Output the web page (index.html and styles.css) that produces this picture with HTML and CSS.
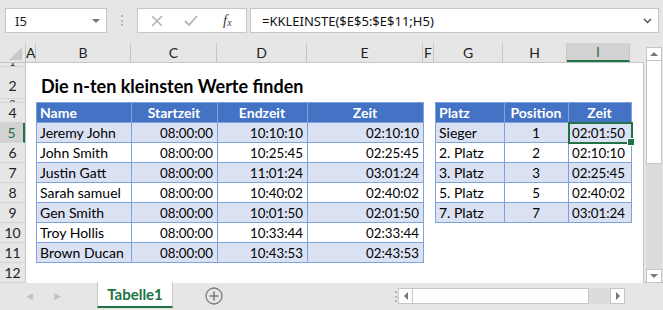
FILE: index.html
```html
<!DOCTYPE html>
<html lang="de">
  <head>
    <meta charset="UTF-8" />
    <title>Die n-ten kleinsten Werte finden</title>
    <link rel="stylesheet" href="styles.css">
  </head>
  <body>
    <div class="formula-bar">
      <div class="name-box">
        <span>I5</span>
        <span class="caret"></span>
      </div>
      <div class="grip"></div>
      <div class="fx-buttons">
        <svg class="btn-cancel" width="12" height="12" viewBox="0 0 12 12">
          <path d="M1 1 L11 11 M11 1 L1 11" stroke="#b4b4b4" stroke-width="1.6" fill="none" />
        </svg>
        <svg class="btn-enter" width="14" height="12" viewBox="0 0 14 12">
          <path d="M1 6 L5 10 L13 1" stroke="#b4b4b4" stroke-width="1.8" fill="none" />
        </svg>
        <span class="fx">f<sub>x</sub></span>
      </div>
      <div class="formula-input">
        <span>=KKLEINSTE($E$5:$E$11;H5)</span>
        <svg width="9" height="6" viewBox="0 0 9 6">
          <path d="M1 1 L4.5 4.5 L8 1" stroke="#555" stroke-width="1.5" fill="none" />
        </svg>
      </div>
    </div>

    <div class="workspace">
      <div class="sheet">
        <div class="col-headers">
          <div class="corner"></div>
          <div class="col-head col-a">A</div>
          <div class="col-head col-b">B</div>
          <div class="col-head col-c">C</div>
          <div class="col-head col-d">D</div>
          <div class="col-head col-e">E</div>
          <div class="col-head col-f">F</div>
          <div class="col-head col-g">G</div>
          <div class="col-head col-h">H</div>
          <div class="col-head col-i active">I</div>
          <div class="col-filler"></div>
        </div>

        <div class="sheet-body">
          <div class="row-headers">
            <div class="row-head row-1"><span>1</span></div>
            <div class="row-head row-2">2</div>
            <div class="row-head row-3"><span>3</span></div>
            <div class="row-head">4</div>
            <div class="row-head active">5</div>
            <div class="row-head">6</div>
            <div class="row-head">7</div>
            <div class="row-head">8</div>
            <div class="row-head">9</div>
            <div class="row-head">10</div>
            <div class="row-head">11</div>
            <div class="row-head">12</div>
          </div>

          <div class="cells">
            <h1 class="title">Die n-ten kleinsten Werte finden</h1>

            <div class="tables">
              <table class="data times">
                <colgroup>
                  <col style="width: 95px" />
                  <col style="width: 86px" />
                  <col style="width: 90px" />
                  <col style="width: 116px" />
                </colgroup>
                <thead>
                  <tr>
                    <th class="left">Name</th>
                    <th>Startzeit</th>
                    <th>Endzeit</th>
                    <th>Zeit</th>
                  </tr>
                </thead>
                <tbody>
                  <tr><td class="left">Jeremy John</td><td>08:00:00</td><td>10:10:10</td><td>02:10:10</td></tr>
                  <tr><td class="left">John Smith</td><td>08:00:00</td><td>10:25:45</td><td>02:25:45</td></tr>
                  <tr><td class="left">Justin Gatt</td><td>08:00:00</td><td>11:01:24</td><td>03:01:24</td></tr>
                  <tr><td class="left">Sarah samuel</td><td>08:00:00</td><td>10:40:02</td><td>02:40:02</td></tr>
                  <tr><td class="left">Gen Smith</td><td>08:00:00</td><td>10:01:50</td><td>02:01:50</td></tr>
                  <tr><td class="left">Troy Hollis</td><td>08:00:00</td><td>10:33:44</td><td>02:33:44</td></tr>
                  <tr><td class="left">Brown Ducan</td><td>08:00:00</td><td>10:43:53</td><td>02:43:53</td></tr>
                </tbody>
              </table>

              <table class="data ranks">
                <colgroup>
                  <col style="width: 69px" />
                  <col style="width: 64px" />
                  <col style="width: 63px" />
                </colgroup>
                <thead>
                  <tr>
                    <th class="left">Platz</th>
                    <th>Position</th>
                    <th>Zeit</th>
                  </tr>
                </thead>
                <tbody>
                  <tr><td class="left">Sieger</td><td class="center">1</td><td class="selected">02:01:50</td></tr>
                  <tr><td class="left">2. Platz</td><td class="center">2</td><td>02:10:10</td></tr>
                  <tr><td class="left">3. Platz</td><td class="center">3</td><td>02:25:45</td></tr>
                  <tr><td class="left">5. Platz</td><td class="center">5</td><td>02:40:02</td></tr>
                  <tr><td class="left">7. Platz</td><td class="center">7</td><td>03:01:24</td></tr>
                </tbody>
              </table>
            </div>
          </div>
        </div>
      </div>

      <div class="vscroll">
        <div class="arrow-box"><span class="tri-up"></span></div>
        <div class="v-thumb"></div>
        <div class="v-track"></div>
        <div class="arrow-box"><span class="tri-down"></span></div>
      </div>
    </div>

    <div class="tab-bar">
      <span class="nav-arrow">&#9664;</span>
      <span class="nav-arrow">&#9654;</span>
      <div class="sheet-tab">Tabelle1</div>
      <svg class="add-sheet" width="18" height="18" viewBox="0 0 18 18">
        <circle cx="9" cy="9" r="8" stroke="#7a7a7a" stroke-width="1.3" fill="none" />
        <path d="M9 4.5 V13.5 M4.5 9 H13.5" stroke="#7a7a7a" stroke-width="1.6" />
      </svg>
      <div class="grip tab-grip"></div>
      <div class="hscroll">
        <div class="arrow-box"><span class="tri-left"></span></div>
        <div class="h-thumb"></div>
        <div class="h-track"></div>
        <div class="arrow-box"><span class="tri-right"></span></div>
      </div>
    </div>
  </body>
</html>
```

FILE: styles.css
```css
/* Reset */
* {
  margin: 0;
  padding: 0;
  box-sizing: border-box;
}

body {
  width: 663px;
  height: 310px;
  overflow: hidden;
  background-color: #e6e6e6;
  font-family: Lato, 'Liberation Sans', sans-serif;
  color: #000;
}

/* Formula bar */
.formula-bar {
  height: 43px;
  display: flex;
  align-items: flex-start;
  padding-top: 8px;
  font-family: 'Noto Sans', sans-serif;
  font-size: 13px;
}

.name-box {
  margin-left: 5px;
  width: 102px;
  height: 25px;
  background-color: #fff;
  border: 1px solid #c6c6c6;
  display: flex;
  align-items: center;
  justify-content: space-between;
  padding: 0 6px 0 9px;
  color: #222;
}

.caret {
  width: 0;
  height: 0;
  border-left: 4px solid transparent;
  border-right: 4px solid transparent;
  border-top: 4px solid #777;
}

.grip {
  width: 2px;
  height: 11px;
  margin: 7px 14px 0 14px;
  border-left: 2px dotted #b4b4b4;
}

.fx-buttons {
  width: 110px;
  height: 25px;
  background-color: #fff;
  border: 1px solid #c6c6c6;
  display: flex;
  align-items: center;
  padding-left: 13px;
}

.btn-enter {
  margin-left: 21px;
}

.fx {
  margin-left: 25px;
  font-family: 'Liberation Serif', serif;
  font-style: italic;
  font-size: 15px;
  color: #444;
}

.fx sub {
  font-size: 10px;
  vertical-align: -1px;
}

.formula-input {
  margin-left: 3px;
  width: 409px;
  height: 25px;
  background-color: #fff;
  border: 1px solid #c6c6c6;
  display: flex;
  align-items: center;
  justify-content: space-between;
  padding: 0 6px 0 11px;
  color: #111;
}

/* Worksheet */
.workspace {
  display: flex;
  height: 239px;
}

.sheet {
  width: 644px;
  display: flex;
  flex-direction: column;
}

.col-headers {
  height: 20px;
  display: flex;
  border-bottom: 1px solid #c6c6c6;
}

.corner {
  width: 26px;
  position: relative;
  border-right: 1px solid #c6c6c6;
}

.corner::after {
  content: '';
  position: absolute;
  right: 3px;
  bottom: 2px;
  border-left: 13px solid transparent;
  border-bottom: 13px solid #c8c8c8;
}

.col-head {
  border-right: 1px solid #c6c6c6;
  text-align: center;
  font-size: 14px;
  line-height: 19px;
  color: #222;
}

.col-head.active {
  background-color: #d2d2d2;
  border-bottom: 2px solid #217346;
  color: #217346;
  line-height: 18px;
}

.col-a { width: 10px; }
.col-b { width: 95px; }
.col-c { width: 86px; }
.col-d { width: 90px; }
.col-e { width: 116px; }
.col-f { width: 11px; }
.col-g { width: 69px; }
.col-h { width: 64px; }
.col-i { width: 63px; }

.col-filler {
  flex: 1;
}

.sheet-body {
  flex: 1;
  display: flex;
}

.row-headers {
  width: 26px;
  border-right: 1px solid #c6c6c6;
}

.row-head {
  height: 20px;
  border-bottom: 1px solid #d4d4d4;
  overflow: hidden;
  text-align: center;
  font-size: 14px;
  line-height: 20px;
  color: #222;
}

/* rows 1 and 3 are squeezed: only a sliver of the number shows */
.row-head.row-1,
.row-head.row-3 {
  height: 4px;
  position: relative;
}

.row-head.row-1 span,
.row-head.row-3 span {
  position: absolute;
  left: 0;
  right: 0;
  font-size: 10px;
  line-height: 10px;
}

.row-head.row-1 span {
  bottom: -1px;
}

.row-head.row-3 span {
  top: -1px;
}

.row-head.row-2 {
  height: 32px;
  line-height: 38px;
}

.row-head.active {
  background-color: #d2d2d2;
  border-right: 2px solid #217346;
  color: #217346;
}

.cells {
  flex: 1;
  background-color: #fff;
  border-right: 1px solid #c6c6c6;
  padding: 3px 0 0 10px;
}

.title {
  height: 36px;
  padding: 10px 0 0 5px;
  font-size: 18px;
  font-weight: bold;
  line-height: 21px;
}

.tables {
  display: flex;
  gap: 11px;
  align-items: flex-start;
}

/* Excel tables */
table.data {
  border-collapse: collapse;
  table-layout: fixed;
  font-size: 14px;
}

table.times {
  width: 387px;
}

table.ranks {
  width: 196px;
}

table.data th,
table.data td {
  height: 20px;
  padding: 0 4px 0 3px;
  border: 1px solid #7ea3dc;
  white-space: nowrap;
  text-align: right;
  line-height: 18px;
}

/* Lato digits run wider than the sheet's font */
table.data td {
  font-size: 13.3px;
}

table.data td.left {
  font-size: 14px;
}

table.ranks td:last-child {
  padding-right: 6px;
}

table.data th {
  background-color: #4472c4;
  color: #fff;
  text-align: center;
}

table.data tbody tr:nth-child(odd) td {
  background-color: #d9e1f2;
}

table.data .left {
  text-align: left;
}

table.data .center {
  text-align: center;
}

table.data td.selected {
  position: relative;
  outline: 2px solid #217346;
  outline-offset: -1px;
}

table.data td.selected::after {
  content: '';
  position: absolute;
  right: -4px;
  bottom: -4px;
  width: 6px;
  height: 6px;
  background-color: #217346;
  border: 1px solid #fff;
}

/* Scrollbars */
.vscroll {
  width: 16px;
  margin: 4px 0 0 2px;
  display: flex;
  flex-direction: column;
  height: 236px;
}

.arrow-box {
  width: 16px;
  height: 14px;
  background-color: #fff;
  border: 1px solid #c6c6c6;
  display: flex;
  align-items: center;
  justify-content: center;
}

.v-thumb {
  height: 103px;
  background-color: #fff;
  border: 1px solid #c6c6c6;
  border-top: none;
}

.v-track {
  flex: 1;
  background-color: #dcdcdc;
}

.tri-up,
.tri-down {
  width: 0;
  height: 0;
  border-left: 4px solid transparent;
  border-right: 4px solid transparent;
}

.tri-up {
  border-bottom: 4px solid #777;
}

.tri-down {
  border-top: 4px solid #777;
}

.tri-left,
.tri-right {
  width: 0;
  height: 0;
  border-top: 4px solid transparent;
  border-bottom: 4px solid transparent;
}

.tri-left {
  border-right: 4px solid #777;
}

.tri-right {
  border-left: 4px solid #777;
}

/* Sheet tabs */
.tab-bar {
  height: 28px;
  border-top: 1px solid #c6c6c6;
  display: flex;
  align-items: flex-start;
}

.nav-arrow {
  margin-top: 7px;
  font-size: 9px;
  color: #c2c2c2;
}

.nav-arrow:first-child {
  margin-left: 26px;
}

.nav-arrow + .nav-arrow {
  margin-left: 21px;
}

.sheet-tab {
  margin: -1px 0 0 36px;
  width: 76px;
  height: 26px;
  background-color: #fff;
  border-left: 1px solid #c6c6c6;
  border-right: 1px solid #c6c6c6;
  border-bottom: 2px solid #217346;
  text-align: center;
  font-size: 15px;
  font-weight: bold;
  line-height: 25px;
  color: #217346;
}

.add-sheet {
  margin: 4px 0 0 32px;
}

.tab-grip {
  margin: 8px 0 0 172px;
}

.hscroll {
  margin: 5px 0 0 1px;
  width: 227px;
  height: 16px;
  display: flex;
}

.hscroll .arrow-box {
  width: 15px;
  height: 16px;
}

.h-thumb {
  width: 176px;
  background-color: #fff;
  border: 1px solid #c6c6c6;
  border-left: none;
}

.h-track {
  flex: 1;
  background-color: #dcdcdc;
}
```
